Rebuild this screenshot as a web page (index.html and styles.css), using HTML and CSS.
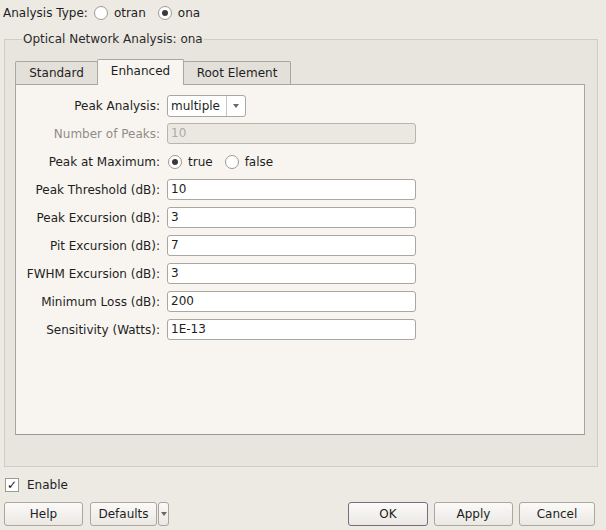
FILE: index.html
```html
<!DOCTYPE html>
<html lang="en">
<head>
    <meta charset="UTF-8">
    <title>Optical Network Analysis</title>
    <link rel="stylesheet" href="styles.css">
</head>
<body>
    <div class="type-row">
        <span>Analysis Type:</span>
        <span class="radio"></span><span class="opt">otran</span>
        <span class="radio checked"></span><span class="opt">ona</span>
    </div>

    <fieldset class="group">
        <legend>Optical Network Analysis: ona</legend>

        <div class="tabs">
            <div class="tab">Standard</div>
            <div class="tab active">Enhanced</div>
            <div class="tab">Root Element</div>
        </div>

        <div class="panel">
            <div class="form">
                <label>Peak Analysis:</label>
                <div class="combo">
                    <span class="combo-text">multiple</span>
                    <span class="combo-btn"><span class="arrow"></span></span>
                </div>

                <label class="disabled">Number of Peaks:</label>
                <div class="field off">10</div>

                <label>Peak at Maximum:</label>
                <div class="choices">
                    <span class="radio checked"></span><span class="opt">true</span>
                    <span class="radio"></span><span class="opt">false</span>
                </div>

                <label>Peak Threshold (dB):</label>
                <div class="field">10</div>

                <label>Peak Excursion (dB):</label>
                <div class="field">3</div>

                <label>Pit Excursion (dB):</label>
                <div class="field">7</div>

                <label>FWHM Excursion (dB):</label>
                <div class="field">3</div>

                <label>Minimum Loss (dB):</label>
                <div class="field">200</div>

                <label>Sensitivity (Watts):</label>
                <div class="field">1E-13</div>
            </div>
        </div>
    </fieldset>

    <div class="enable-row">
        <span class="check">&#10003;</span>
        <span>Enable</span>
    </div>

    <div class="buttons">
        <button class="btn help">Help</button>
        <div class="split">
            <button class="btn defaults">Defaults</button>
            <button class="btn drop"><span class="arrow"></span></button>
        </div>
        <div class="spacer"></div>
        <button class="btn ok">OK</button>
        <button class="btn apply">Apply</button>
        <button class="btn cancel">Cancel</button>
    </div>
</body>
</html>
```

FILE: styles.css
```css
body {
    margin: 0;
    width: 606px;
    height: 530px;
    background-color: #edeae4;
    font-family: 'DejaVu Sans', sans-serif;
    font-size: 12px;
    color: #1e1e1e;
    overflow: hidden;
}

.type-row {
    display: flex;
    align-items: center;
    height: 26px;
    padding-left: 3px;
}

.radio {
    display: inline-block;
    box-sizing: border-box;
    width: 14px;
    height: 14px;
    border: 1px solid #9d9993;
    border-radius: 50%;
    background-color: #fff;
    margin: 0 6px 0 6px;
    position: relative;
}

.radio.checked::after {
    content: "";
    position: absolute;
    left: 3px;
    top: 3px;
    width: 6px;
    height: 6px;
    border-radius: 50%;
    background-color: #3a3a3a;
}

.opt {
    margin-right: 6px;
}

.group {
    margin: 6px 8px 0 4px;
    padding: 11px 12px 31px 10px;
    border: 1px solid #d0ccc6;
    background-color: #e8e5df;
    min-width: 0;
}

.group legend {
    padding: 0 1px;
    margin-left: 7px;
    color: #2a2a2a;
}

.tabs {
    display: flex;
    align-items: flex-end;
    height: 25px;
    padding-top: 2px;
}

.tab {
    box-sizing: border-box;
    height: 23px;
    border: 1px solid #aaa6a0;
    border-bottom: none;
    border-radius: 2px 2px 0 0;
    background-color: #e3dfd9;
    display: flex;
    align-items: center;
    justify-content: center;
}

.tab:nth-child(1) { width: 83px; }
.tab:nth-child(2) { width: 87px; }
.tab:nth-child(3) { width: 108px; }

.tab.active {
    height: 26px;
    margin-bottom: -1px;
    background-color: #f8f5f0;
    padding-bottom: 3px;
    position: relative;
    z-index: 1;
    margin-left: -1px;
    margin-right: -1px;
}

.panel {
    height: 351px;
    box-sizing: border-box;
    border: 1px solid #a8a49e;
    border-bottom-color: #9c9892;
    background-color: #f8f5f0;
    padding: 10px 0 0 0;
}

.form {
    display: grid;
    grid-template-columns: 144px 249px;
    grid-auto-rows: 22px;
    column-gap: 7px;
    row-gap: 6px;
}

.form label {
    text-align: right;
    align-self: center;
}

.form label.disabled {
    color: #8f8c87;
}

.field {
    box-sizing: border-box;
    height: 21px;
    border: 1px solid #aaa6a0;
    border-radius: 3px;
    background-color: #fff;
    padding-left: 3px;
    line-height: 19px;
}

.field.off {
    background-color: #ebe8e2;
    border-color: #b8b4ae;
    color: #aeaaa4;
}

.combo {
    box-sizing: border-box;
    width: 79px;
    height: 22px;
    border: 1px solid #aaa6a0;
    border-radius: 3px;
    background-color: #fff;
    display: flex;
}

.combo-text {
    flex: 1;
    padding-left: 3px;
    line-height: 20px;
    border-right: 1px solid #c8c4be;
}

.combo-btn {
    width: 18px;
    display: flex;
    align-items: center;
    justify-content: center;
}

.arrow {
    display: inline-block;
    width: 0;
    height: 0;
    border-left: 3px solid transparent;
    border-right: 3px solid transparent;
    border-top: 4px solid #6b6863;
}

.choices {
    display: flex;
    align-items: center;
}

.choices .radio {
    margin: 0 6px 0 1px;
}

.choices .opt {
    margin-right: 11px;
}

.enable-row {
    display: flex;
    align-items: center;
    height: 20px;
    margin-top: 8px;
    padding-left: 5px;
}

.check {
    box-sizing: border-box;
    width: 14px;
    height: 14px;
    border: 1px solid #9d9993;
    background-color: #fff;
    font-size: 12px;
    font-weight: bold;
    line-height: 12px;
    text-align: center;
    color: #111;
    margin-right: 8px;
}

.buttons {
    display: flex;
    align-items: center;
    margin-top: 7px;
    padding: 0 11px 0 4px;
}

.btn {
    box-sizing: border-box;
    height: 24px;
    border: 1px solid #aaa6a0;
    border-radius: 3px;
    background: linear-gradient(#fbfaf8, #ebe8e3);
    font-family: 'DejaVu Sans', sans-serif;
    font-size: 12px;
    color: #1e1e1e;
    padding: 0;
    margin: 0;
}

.help { width: 79px; }

.split {
    display: flex;
    margin-left: 7px;
}

.defaults { width: 67px; }

.drop {
    width: 11px;
    margin-left: 1px;
    display: flex;
    align-items: center;
    justify-content: center;
}

.spacer {
    flex: 1;
}

.ok {
    width: 80px;
    border-color: #756c80;
}

.apply {
    width: 79px;
    margin-left: 6px;
}

.cancel {
    width: 76px;
    margin-left: 6px;
}
```
